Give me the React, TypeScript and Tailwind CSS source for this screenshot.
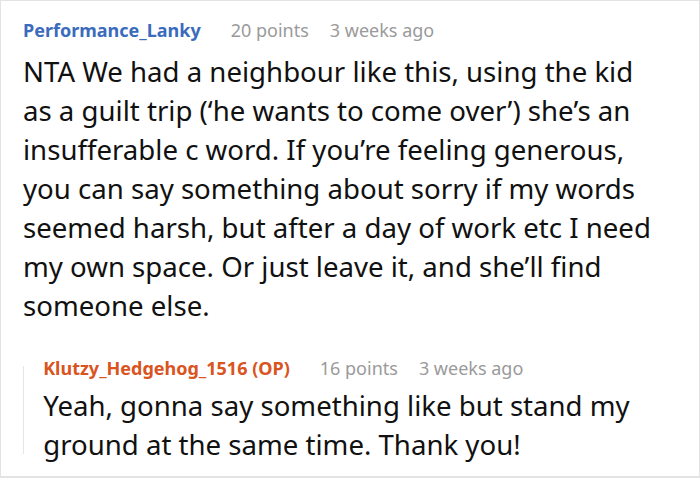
export default function App() {
  return (
    <div
      className="w-[700px] h-[478px] bg-white border border-[#e3e3e3] border-b-2 overflow-hidden"
      style={{ fontFamily: '"Noto Sans", sans-serif' }}
    >
      <div className="pl-[22px] pr-[36px] pt-[17px]">
        <div className="flex items-center text-[18px] leading-[24px]">
          <span className="font-bold text-[#3a6bbd]">Performance_Lanky</span>
          <span className="ml-[30px] text-[#9a9a9a]">20 points</span>
          <span className="ml-[21px] text-[#9a9a9a]">3 weeks ago</span>
        </div>
        <p className="mt-[10px] text-[27.6px] leading-[39px] text-[#111]">
          NTA We had a neighbour like this, using the kid as a guilt trip (‘he wants to come over’) she’s an insufferable c word. If you’re feeling generous, you can say something about sorry if my words seemed harsh, but after a day of work etc I need my own space. Or just leave it, and she’ll find someone else.
        </p>
        <div className="mt-[31px] flex">
          <div className="w-[2px] bg-[#e6e6e6] my-[10px]" />
          <div className="pl-[19px]">
            <div className="flex items-center text-[18px] leading-[24px]">
              <span className="font-bold text-[#d9541e]">Klutzy_Hedgehog_1516 (OP)</span>
              <span className="ml-[30px] text-[#9a9a9a]">16 points</span>
              <span className="ml-[21px] text-[#9a9a9a]">3 weeks ago</span>
            </div>
            <p className="mt-[6px] text-[27.6px] leading-[39px] text-[#111]">
              Yeah, gonna say something like but stand my ground at the same time. Thank you!
            </p>
          </div>
        </div>
      </div>
    </div>
  );
}
